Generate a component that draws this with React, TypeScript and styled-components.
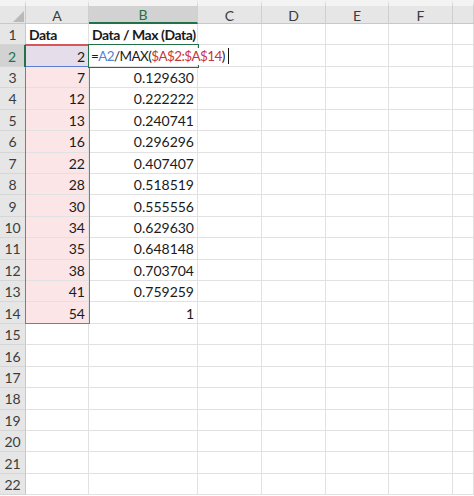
import React from 'react';
import styled, { createGlobalStyle } from 'styled-components';

const ROW_H = 300 / 14;
const HEAD_H = 24;
const GREEN = '#217346';
const RED = '#d4575c';
const BLUE = '#5b7fd4';

const Global = createGlobalStyle`
  html, body { margin: 0; padding: 0; background: #fff; }
  body { font-family: Lato, "Noto Sans", "Liberation Sans", sans-serif; }
`;

const Sheet = styled.div`
  position: relative;
  width: 474px;
  height: 496px;
  overflow: hidden;
  display: grid;
  grid-template-columns: 26px 63px 109px 64px 64px 63px 64px 1fr;
  grid-template-rows: ${HEAD_H}px repeat(22, ${ROW_H}px);
  background: #fff;
  font-size: 14px;
  color: #1a1a1a;
`;

const Corner = styled.div`
  position: relative;
  box-sizing: border-box;
  background: #e6e6e6;
  border-top: 6px solid #f3f3f3;
  border-right: 1px solid #c8c8c8;
  border-bottom: 1px solid #c8c8c8;
  &::after {
    content: '';
    position: absolute;
    right: 1px;
    bottom: 1px;
    width: 11px;
    height: 11px;
    background: #b9b9b9;
    clip-path: polygon(100% 0, 100% 100%, 0 100%);
  }
`;

const ColHeader = styled.div<{ $sel?: boolean }>`
  box-sizing: border-box;
  display: flex;
  align-items: center;
  justify-content: center;
  padding-top: 1px;
  background: ${(p) => (p.$sel ? '#d2d2d2' : '#e6e6e6')};
  border-top: 6px solid #f3f3f3;
  border-right: 1px solid #cfcfcf;
  border-bottom: ${(p) => (p.$sel ? `2px solid ${GREEN}` : '1px solid #c8c8c8')};
  color: ${(p) => (p.$sel ? GREEN : '#3c3c3c')};
  font-size: 14px;
`;

const RowHeader = styled.div<{ $sel?: boolean }>`
  box-sizing: border-box;
  display: flex;
  align-items: center;
  justify-content: center;
  padding-top: 1px;
  background: ${(p) => (p.$sel ? '#d2d2d2' : '#e6e6e6')};
  border-right: ${(p) => (p.$sel ? `2px solid ${GREEN}` : '1px solid #c8c8c8')};
  border-bottom: 1px solid #d6d6d6;
  color: ${(p) => (p.$sel ? GREEN : '#3c3c3c')};
  font-size: 14px;
`;

const Cell = styled.div<{ $align?: 'left' | 'right'; $fill?: string; $bold?: boolean }>`
  box-sizing: border-box;
  display: flex;
  align-items: center;
  justify-content: ${(p) => (p.$align === 'right' ? 'flex-end' : 'flex-start')};
  padding: 1px 3px 0 3px;
  background: ${(p) => p.$fill || '#fff'};
  border-right: 1px solid #e1e1e1;
  border-bottom: 1px solid #e1e1e1;
  font-weight: ${(p) => (p.$bold ? 700 : 400)};
  letter-spacing: ${(p) => (p.$bold ? '-0.45px' : '0')};
  white-space: nowrap;
`;

const EditCell = styled(Cell)`
  position: relative;
  z-index: 4;
  overflow: visible;
  padding-left: 2px;
`;

const Editor = styled.span`
  display: inline-flex;
  align-items: center;
  background: #fff;
  padding-right: 3px;
  height: 17px;
  font-size: 13.5px;
  letter-spacing: -0.6px;
`;

const Ref = styled.span<{ $color: string }>`
  color: ${(p) => p.$color};
`;

const Caret = styled.span`
  display: inline-block;
  width: 1px;
  height: 16px;
  margin-left: 3px;
  background: #111;
`;

const Box = styled.div<{ $color: string; $w: number }>`
  position: absolute;
  box-sizing: border-box;
  border: ${(p) => p.$w}px solid ${(p) => p.$color};
  pointer-events: none;
  z-index: 3;
`;

const cols = ['A', 'B', 'C', 'D', 'E', 'F', ''];
const data = [2, 7, 12, 13, 16, 22, 28, 30, 34, 35, 38, 41, 54];
const ratios = [
  '', '0.129630', '0.222222', '0.240741', '0.296296', '0.407407', '0.518519',
  '0.555556', '0.629630', '0.648148', '0.703704', '0.759259', '1',
];

const PINK = '#fbe5e6';
const LAVENDER = '#e5deea';

const rowTop = (r: number) => HEAD_H + (r - 1) * ROW_H;

export default function App() {
  const rows = Array.from({ length: 22 }, (_, i) => i + 1);
  return (
    <>
      <Global />
      <Sheet>
        <Corner />
        {cols.map((c, i) => (
          <ColHeader key={i} $sel={c === 'B'}>{c}</ColHeader>
        ))}
        {rows.map((r) => {
          const cells: React.ReactNode[] = [];
          cells.push(<RowHeader key={`h${r}`} $sel={r === 2}>{r}</RowHeader>);
          if (r === 1) {
            cells.push(<Cell key={`a${r}`} $bold>Data</Cell>);
          } else if (r <= 14) {
            cells.push(
              <Cell key={`a${r}`} $align="right" $fill={r === 2 ? LAVENDER : PINK}>{data[r - 2]}</Cell>,
            );
          } else {
            cells.push(<Cell key={`a${r}`} />);
          }
          if (r === 1) {
            cells.push(<Cell key={`b${r}`} $bold>Data / Max (Data)</Cell>);
          } else if (r === 2) {
            cells.push(
              <EditCell key={`b${r}`}>
                <Editor>
                  =<Ref $color={BLUE}>A2</Ref>/MAX(<Ref $color="#c9353c">$A$2:$A$14</Ref>)
                  <Caret />
                </Editor>
              </EditCell>,
            );
          } else if (r <= 14) {
            cells.push(<Cell key={`b${r}`} $align="right">{ratios[r - 2]}</Cell>);
          } else {
            cells.push(<Cell key={`b${r}`} />);
          }
          for (let k = 0; k < 5; k++) cells.push(<Cell key={`x${r}-${k}`} />);
          return <React.Fragment key={r}>{cells}</React.Fragment>;
        })}
        <Box $color={RED} $w={1} style={{ left: 25, top: rowTop(2) - 1, width: 65, height: 13 * ROW_H + 1 }} />
        <Box $color={BLUE} $w={1} style={{ left: 25, top: rowTop(2) - 1, width: 65, height: ROW_H + 1 }} />
        <Box $color={RED} $w={1} style={{ left: 25, top: rowTop(2) - 1, width: 65, height: 1 }} />
        <Box $color={GREEN} $w={2} style={{ left: 88, top: rowTop(2) - 1, width: 111, height: ROW_H + 2 }} />
        <Box $color={GREEN} $w={0} style={{ left: 24, top: rowTop(2), width: 2, height: ROW_H, background: GREEN }} />
      </Sheet>
    </>
  );
}
